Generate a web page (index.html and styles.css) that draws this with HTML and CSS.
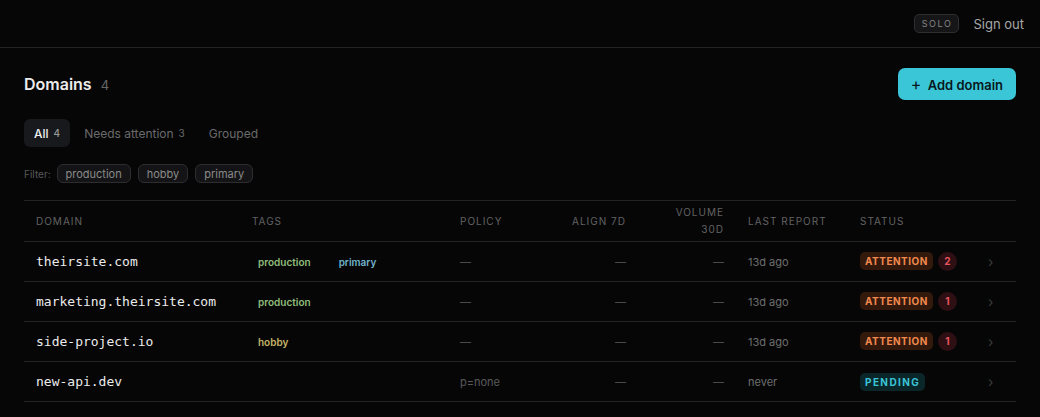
FILE: index.html
```html
<!DOCTYPE html>
<html lang="en">
<head>
  <meta charset="UTF-8" />
  <meta name="viewport" content="width=device-width, initial-scale=1.0" />
  <title>Domains</title>
  <link rel="stylesheet" href="styles.css">
</head>
<body>
  <header class="topbar">
    <span class="plan">SOLO</span>
    <a class="signout" href="#">Sign out</a>
  </header>

  <main class="page">
    <div class="page-head">
      <h1>Domains <span class="count">4</span></h1>
      <button class="btn-add"><span class="plus">+</span> Add domain</button>
    </div>

    <nav class="tabs">
      <a class="tab active" href="#">All <span class="n">4</span></a>
      <a class="tab" href="#">Needs attention <span class="n">3</span></a>
      <a class="tab" href="#">Grouped</a>
    </nav>

    <div class="filters">
      <span class="filter-label">Filter:</span>
      <button class="chip">production</button>
      <button class="chip">hobby</button>
      <button class="chip">primary</button>
    </div>

    <table class="domains">
      <colgroup>
        <col class="c-domain">
        <col class="c-tags">
        <col class="c-policy">
        <col class="c-align">
        <col class="c-volume">
        <col class="c-report">
        <col class="c-status">
        <col class="c-go">
      </colgroup>
      <thead>
        <tr>
          <th>Domain</th>
          <th>Tags</th>
          <th>Policy</th>
          <th class="num">Align 7D</th>
          <th class="num">Volume 30D</th>
          <th>Last report</th>
          <th>Status</th>
          <th></th>
        </tr>
      </thead>
      <tbody>
        <tr>
          <td class="name">theirsite.com</td>
          <td><span class="tag prod">production</span><span class="tag prim">primary</span></td>
          <td class="dim">—</td>
          <td class="num dim">—</td>
          <td class="num dim">—</td>
          <td class="when">13d ago</td>
          <td><span class="badge warn">ATTENTION</span><span class="issues">2</span></td>
          <td class="go">›</td>
        </tr>
        <tr>
          <td class="name">marketing.theirsite.com</td>
          <td><span class="tag prod">production</span></td>
          <td class="dim">—</td>
          <td class="num dim">—</td>
          <td class="num dim">—</td>
          <td class="when">13d ago</td>
          <td><span class="badge warn">ATTENTION</span><span class="issues">1</span></td>
          <td class="go">›</td>
        </tr>
        <tr>
          <td class="name">side-project.io</td>
          <td><span class="tag hobby">hobby</span></td>
          <td class="dim">—</td>
          <td class="num dim">—</td>
          <td class="num dim">—</td>
          <td class="when">13d ago</td>
          <td><span class="badge warn">ATTENTION</span><span class="issues">1</span></td>
          <td class="go">›</td>
        </tr>
        <tr>
          <td class="name">new-api.dev</td>
          <td></td>
          <td class="policy">p=none</td>
          <td class="num dim">—</td>
          <td class="num dim">—</td>
          <td class="when">never</td>
          <td><span class="badge pending">PENDING</span></td>
          <td class="go">›</td>
        </tr>
      </tbody>
    </table>
  </main>
</body>
</html>
```

FILE: styles.css
```css
body {
  font-family: Inter, 'Noto Sans', sans-serif;
  background-color: #060607;
  color: #e8e8e8;
  margin: 0;
  padding: 0;
}

.topbar {
  height: 47px;
  border-bottom: 1px solid #222325;
  display: flex;
  align-items: center;
  justify-content: flex-end;
  gap: 14px;
  padding: 0 16px;
}
.plan {
  font-size: 9px;
  letter-spacing: 1.6px;
  color: #858585;
  background: #161618;
  border: 1px solid #2e2e31;
  border-radius: 5px;
  padding: 3px 6px 3px 7px;
}
.signout {
  color: #a8a8a8;
  font-size: 13px;
  text-decoration: none;
}

.page {
  padding: 20px 24px;
}
.page-head {
  display: flex;
  align-items: center;
  justify-content: space-between;
  height: 32px;
}
h1 {
  margin: 0;
  font-size: 16px;
  font-weight: 600;
  color: #ececec;
}
h1 .count {
  font-size: 13px;
  font-weight: 400;
  color: #666;
  margin-left: 5px;
}
.btn-add {
  background: #3ac6d7;
  color: #08171b;
  border: none;
  border-radius: 7px;
  height: 32px;
  padding: 0 13px;
  font-family: inherit;
  font-size: 13px;
  font-weight: 600;
  cursor: pointer;
}
.btn-add .plus {
  font-weight: 400;
  font-size: 16px;
  margin-right: 3px;
}

.tabs {
  display: flex;
  gap: 4px;
  margin-top: 19px;
}
.tab {
  display: flex;
  align-items: center;
  height: 28px;
  padding: 0 10px;
  border-radius: 6px;
  font-size: 12px;
  color: #6a6a6a;
  text-decoration: none;
}
.tab .n {
  font-size: 10px;
  margin-left: 5px;
  color: #6a6a6a;
}
.tab.active {
  background: #17191d;
  color: #f0f0f0;
  font-weight: 500;
}
.tab.active .n {
  color: #999;
}

.filters {
  display: flex;
  align-items: center;
  gap: 7px;
  margin-top: 17px;
}
.filter-label {
  font-size: 10px;
  color: #585858;
  margin-right: -1px;
}
.chip {
  font-family: inherit;
  font-size: 11px;
  color: #8a8a8a;
  background: #141416;
  border: 1px solid #2d2d30;
  border-radius: 6px;
  height: 19px;
  padding: 0 8px;
}

.domains {
  width: 100%;
  margin-top: 17px;
  border-collapse: collapse;
  table-layout: fixed;
  border-top: 1px solid #222325;
}
.c-domain { width: 216px; }
.c-tags { width: 208px; }
.c-policy { width: 100px; }
.c-align { width: 90px; }
.c-volume { width: 98px; }
.c-report { width: 112px; }
.c-status { width: 128px; }
.c-go { width: 40px; }

th {
  height: 40px;
  padding: 0 12px;
  text-align: left;
  font-size: 10px;
  font-weight: 400;
  letter-spacing: 1px;
  text-transform: uppercase;
  color: #626262;
  line-height: 17px;
  border-bottom: 1px solid #222325;
}
td {
  height: 39px;
  padding: 0 12px;
  font-size: 11px;
  border-bottom: 1px solid #222325;
}
.num {
  text-align: right;
}
.name {
  font-family: 'DejaVu Sans Mono', 'Liberation Mono', monospace;
  font-size: 13px;
  color: #ececec;
}
.dim {
  color: #4a4a4a;
}
.policy {
  color: #5a5a5a;
}
.when {
  color: #6e6e6e;
}

.tag {
  display: inline-block;
  font-size: 10px;
  font-weight: 600;
  padding: 2px 6px;
  border-radius: 4px;
  margin-right: 16px;
}
.tag.prod { color: #8fbd7c; }
.tag.prim { color: #72b2cc; }
.tag.hobby { color: #c4b468; }

.badge {
  display: inline-block;
  font-size: 10px;
  font-weight: 700;
  letter-spacing: 0.5px;
  line-height: 18px;
  padding: 0 5px;
  border-radius: 5px;
}
.badge.warn {
  color: #f08a4e;
  background: #33190c;
}
.badge.pending {
  color: #3ac4d8;
  background: #0b2629;
  letter-spacing: 1.4px;
}
.issues {
  display: inline-block;
  width: 19px;
  height: 19px;
  line-height: 19px;
  margin-left: 5px;
  border-radius: 50%;
  text-align: center;
  font-size: 10px;
  font-weight: 700;
  color: #e8555f;
  background: #2d0f14;
}
.go {
  color: #3c3c3c;
  font-size: 14px;
}
```
